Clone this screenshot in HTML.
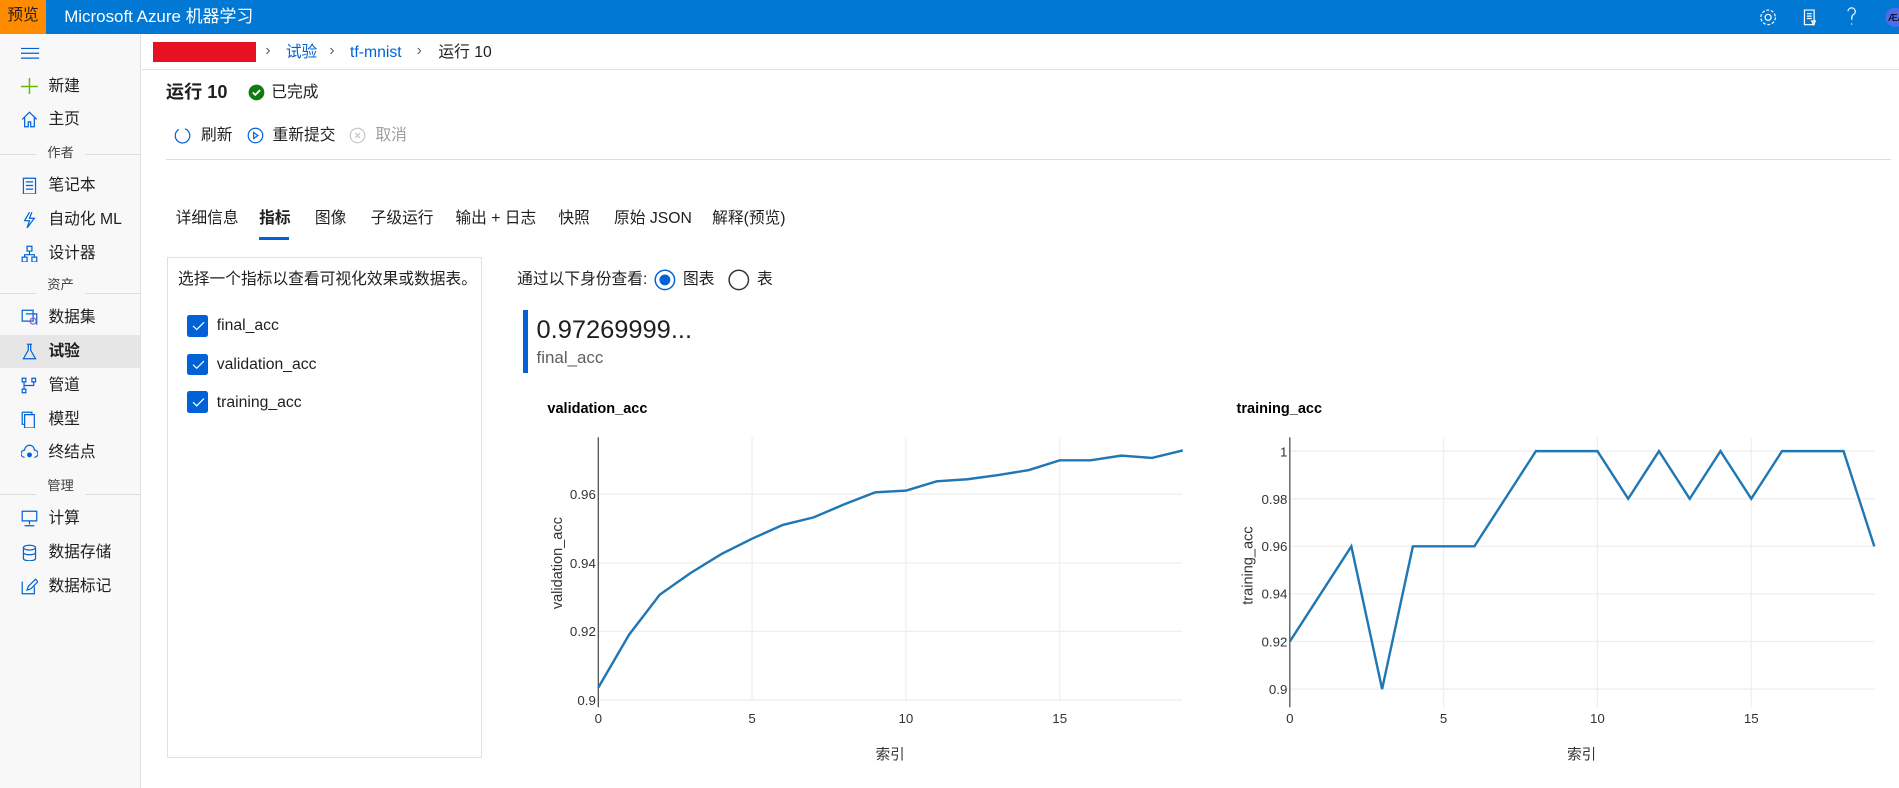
<!DOCTYPE html>
<html><head><meta charset="utf-8">
<style>
html,body{margin:0;padding:0;background:#fff;overflow:hidden}
body{width:1899px;height:788px}
#root{position:absolute;left:0;top:0;width:1568px;height:651px;zoom:1.2111;font-family:"Liberation Sans","Noto Sans CJK SC",sans-serif;color:#201f1e;font-size:13px;line-height:1.15}
.a{position:absolute;white-space:nowrap}
.top{left:0;top:0;width:1568px;height:28px;background:#0078d4}
.side{left:0;top:28px;width:116px;height:623px;background:#f8f8f8;border-right:1px solid #e1e1e1}
.nav{left:40px;font-size:13px}
.ic{left:17px;width:14px;height:14px}
.hd{font-size:11px;color:#444}
.sep{height:1px;background:#ddd}
.tab{top:173px;font-size:13px}
.cb{left:154px;width:18px;height:18px;background:#0062d6;border-radius:2px}
</style></head><body><div id="root">
<div class="a top"></div>
<div class="a" style="left:0;top:0;width:38px;height:28px;background:#ff8c00"></div>
<div class="a" style="left:6px;top:6px;font-size:13px;color:#201f1e">预览</div>
<div class="a" style="left:53px;top:6px;font-size:14px;color:#fff">Microsoft Azure 机器学习</div>
<svg class="a" style="left:1450px;top:3px" width="118" height="22" viewBox="0 0 118 22">
<g fill="none" stroke="#fff" stroke-width="1">
<circle cx="10" cy="11" r="2.5"/><circle cx="10" cy="11" r="6" stroke-dasharray="2.4 1.4"/>
<path d="M40 5h8v12h-8z M42 8h4 M42 10h4 M42 12h4 M46 14l3 0 -1.5 3z"/>
<path d="M76 6a3 3 0 1 1 4 3c-1 1-1 2-1 4 M79 16v1"/>
</g>
<circle cx="115" cy="11" r="8" fill="#4f6bed"/><text x="109" y="14" font-size="8" fill="#000" font-family="Liberation Sans">ÆA</text>
</svg>
<div class="a side"></div>
<svg class="a" style="left:17px;top:38px" width="16" height="12"><path d="M0 2h15M0 6h15M0 10h15" stroke="#0062d6" stroke-width="1"/></svg>
<svg class="a ic" style="top:64px"><path d="M7 0v14M0 7h14" stroke="#6bb700" stroke-width="1.2"/></svg>
<div class="a nav" style="top:64px">新建</div>
<svg class="a ic" style="top:92px"><path d="M1 7L7 1l6 6M3 5v8h3V9h2v4h3V5" fill="none" stroke="#0062d6"/></svg>
<div class="a nav" style="top:92px">主页</div>
<div class="a sep" style="left:0;top:127px;width:30px"></div><div class="a sep" style="left:70px;top:127px;width:46px"></div>
<div class="a hd" style="left:39px;top:120px">作者</div>
<svg class="a ic" style="top:146px"><path d="M2 1h10v13H2z M4 4h6M4 7h6M4 10h6" fill="none" stroke="#0062d6"/></svg>
<div class="a nav" style="top:146px">笔记本</div>
<svg class="a ic" style="top:174px"><path d="M7 1L3 8h4l-2 6 6-8H7l2-5" fill="none" stroke="#0062d6"/></svg>
<div class="a nav" style="top:174px">自动化 ML</div>
<svg class="a ic" style="top:202px"><path d="M5 1h4v4H5z M1 10h4v4H1z M9 10h4v4H9z M7 5v3M3 10V8h8v2" fill="none" stroke="#0062d6"/></svg>
<div class="a nav" style="top:202px">设计器</div>
<div class="a sep" style="left:0;top:242px;width:30px"></div><div class="a sep" style="left:70px;top:242px;width:46px"></div>
<div class="a hd" style="left:39px;top:229px">资产</div>
<svg class="a ic" style="top:255px"><path d="M1 1h9v9H1z M4 4h9v9" fill="none" stroke="#0062d6"/><circle cx="10" cy="10" r="2.5" fill="none" stroke="#8661c5"/></svg>
<div class="a nav" style="top:255px">数据集</div>
<div class="a" style="left:0;top:277px;width:116px;height:27px;background:#e6e6e6"></div>
<svg class="a ic" style="top:283px"><path d="M5 1h4M6 1v5L2 13h10L8 6V1" fill="none" stroke="#0062d6"/></svg>
<div class="a nav" style="top:283px;font-weight:bold">试验</div>
<svg class="a ic" style="top:311px"><path d="M1 1h3v3H1z M9 1h3v3H9z M1 10h3v3H1z M2.5 4v6M10.5 4v3H2.5" fill="none" stroke="#0062d6"/></svg>
<div class="a nav" style="top:311px">管道</div>
<svg class="a ic" style="top:339px"><path d="M1 1h8v2 M3 3h8v11H3z M1 1v10h2" fill="none" stroke="#0062d6"/></svg>
<div class="a nav" style="top:339px">模型</div>
<svg class="a ic" style="top:367px"><path d="M3 11a3 3 0 0 1 0-6 4 4 0 0 1 8 0 3 3 0 0 1 0 6" fill="none" stroke="#0062d6"/><circle cx="7" cy="9" r="2" fill="#0062d6"/></svg>
<div class="a nav" style="top:367px">终结点</div>
<div class="a sep" style="left:0;top:408px;width:30px"></div><div class="a sep" style="left:70px;top:408px;width:46px"></div>
<div class="a hd" style="left:39px;top:395px">管理</div>
<svg class="a ic" style="top:421px"><path d="M1 1h12v8H1z M7 9v3M3 13h8" fill="none" stroke="#0062d6"/></svg>
<div class="a nav" style="top:421px">计算</div>
<svg class="a ic" style="top:449px"><ellipse cx="7" cy="3" rx="5" ry="2" fill="none" stroke="#0062d6"/><path d="M2 3v9c0 2.5 10 2.5 10 0V3M2 7c0 2.5 10 2.5 10 0" fill="none" stroke="#0062d6"/></svg>
<div class="a nav" style="top:449px">数据存储</div>
<svg class="a ic" style="top:477px"><path d="M1 3v10h10V7 M5 10l1-3 6-6 2 2-6 6z" fill="none" stroke="#0062d6"/></svg>
<div class="a nav" style="top:477px">数据标记</div>

<div class="a" style="left:126px;top:35px;width:85px;height:16px;background:#e81123"></div>
<div class="a" style="left:219px;top:35px;color:#666">›</div>
<div class="a" style="left:236px;top:36px;color:#0062d6">试验</div>
<div class="a" style="left:272px;top:35px;color:#666">›</div>
<div class="a" style="left:289px;top:36px;color:#0062d6">tf-mnist</div>
<div class="a" style="left:344px;top:35px;color:#666">›</div>
<div class="a" style="left:362px;top:36px">运行 10</div>
<div class="a sep" style="left:117px;top:57px;width:1451px;background:#e1e1e1"></div>
<div class="a" style="left:137px;top:68px;font-size:15px;font-weight:bold">运行 10</div>
<svg class="a" style="left:205px;top:69px" width="14" height="14"><circle cx="7" cy="7" r="6.5" fill="#107c10"/><path d="M4 7l2 2 4-4" stroke="#fff" stroke-width="1.5" fill="none"/></svg>
<div class="a" style="left:224px;top:69px">已完成</div>
<svg class="a" style="left:144px;top:105px" width="14" height="14"><path d="M4 2A6 6 0 1 0 9 1.5" fill="none" stroke="#0062d6"/></svg>
<div class="a" style="left:166px;top:105px">刷新</div>
<svg class="a" style="left:204px;top:105px" width="14" height="14"><circle cx="7" cy="7" r="6" fill="none" stroke="#0062d6"/><path d="M5.5 4.5v5l3.5-2.5z" fill="none" stroke="#0062d6"/></svg>
<div class="a" style="left:225px;top:105px">重新提交</div>
<svg class="a" style="left:288px;top:105px" width="14" height="14"><circle cx="7" cy="7" r="6" fill="none" stroke="#c8c6c4"/><path d="M5 5l4 4M9 5l-4 4" stroke="#c8c6c4"/></svg>
<div class="a" style="left:310px;top:105px;color:#a19f9d">取消</div>
<div class="a sep" style="left:137px;top:131px;width:1424px;background:#ddd"></div>

<div class="a tab" style="left:145px">详细信息</div>
<div class="a tab" style="left:214px;font-weight:bold">指标</div>
<div class="a" style="left:214px;top:196px;width:25px;height:2px;background:#0062d6"></div>
<div class="a tab" style="left:260px">图像</div>
<div class="a tab" style="left:306px">子级运行</div>
<div class="a tab" style="left:376px">输出 + 日志</div>
<div class="a tab" style="left:461px">快照</div>
<div class="a tab" style="left:507px">原始 JSON</div>
<div class="a tab" style="left:588px">解释(预览)</div>

<div class="a" style="left:138px;top:212px;width:258px;height:412px;border:1px solid #e1e1e1"></div>
<div class="a" style="left:147px;top:224px">选择一个指标以查看可视化效果或数据表。</div>
<div class="a cb" style="top:260px"></div><div class="a cb" style="top:292px"></div><div class="a cb" style="top:323px"></div>
<svg class="a" style="left:154px;top:260px" width="18" height="82"><g stroke="#fff" fill="none" stroke-width="1"><path d="M5 9l3 3 6-6"/><path d="M5 41l3 3 6-6"/><path d="M5 72l3 3 6-6"/></g></svg>
<div class="a" style="left:179px;top:262px">final_acc</div>
<div class="a" style="left:179px;top:294px">validation_acc</div>
<div class="a" style="left:179px;top:325px">training_acc</div>

<div class="a" style="left:427px;top:224px">通过以下身份查看:</div>
<svg class="a" style="left:540px;top:222px" width="100" height="20"><circle cx="9" cy="9" r="8" fill="none" stroke="#0062d6" stroke-width="1.2"/><circle cx="9" cy="9" r="4.5" fill="#0062d6"/><circle cx="70" cy="9" r="8" fill="none" stroke="#333" stroke-width="1.2"/></svg>
<div class="a" style="left:564px;top:224px">图表</div>
<div class="a" style="left:625px;top:224px">表</div>
<div class="a" style="left:432px;top:256px;width:4px;height:52px;background:#0062d6"></div>
<div class="a" style="left:443px;top:261px;font-size:21px">0.97269999...</div>
<div class="a" style="left:443px;top:287px;font-size:14px;color:#605e5c">final_acc</div>

<svg class="a" style="left:0;top:0" width="1568" height="651" font-family="Liberation Sans,Noto Sans CJK SC,sans-serif">
<text x="452" y="341" font-size="12" font-weight="bold" fill="#000">validation_acc</text>
<text x="1021" y="341" font-size="12" font-weight="bold" fill="#000">training_acc</text>
<g stroke="#eee" stroke-width="1">
<path d="M621 361V578M748 361V578M875 361V578M494 521.3H976M494 464.7H976M494 408H976M494 578H976"/>
<path d="M1192 361V584M1319 361V584M1446 361V584M1065 372.5H1548M1065 411.8H1548M1065 451.1H1548M1065 490.4H1548M1065 529.7H1548M1065 569H1548"/>
</g>
<path d="M494 361V584M1065 361V584" stroke="#444" stroke-width="1"/>
<polyline fill="none" stroke="#1f77b4" stroke-width="2" points="494,567.8 519.4,524.1 544.8,491 570.2,473.1 595.6,457.5 621,444.8 646.4,433.4 671.8,427.2 697.2,416.4 722.6,406.5 748,405.1 773.4,397.4 798.8,395.7 824.2,392.3 849.6,388.1 875,380.1 900.4,380.1 925.8,376.2 951.2,378.1 976.6,371.9"/>
<polyline fill="none" stroke="#1f77b4" stroke-width="2" points="1065,529.7 1090.4,490.4 1115.8,451.1 1141.2,569 1166.6,451.1 1192,451.1 1217.4,451.1 1242.8,411.8 1268.2,372.5 1293.6,372.5 1319,372.5 1344.4,411.8 1369.8,372.5 1395.2,411.8 1420.6,372.5 1446,411.8 1471.4,372.5 1496.8,372.5 1522.2,372.5 1547.6,451.1"/>
<g font-size="11" fill="#333" text-anchor="end">
<text x="492" y="582">0.9</text><text x="492" y="525">0.92</text><text x="492" y="469">0.94</text><text x="492" y="412">0.96</text>
<text x="1063" y="573">0.9</text><text x="1063" y="534">0.92</text><text x="1063" y="494">0.94</text><text x="1063" y="455">0.96</text><text x="1063" y="416">0.98</text><text x="1063" y="377">1</text>
</g>
<g font-size="11" fill="#333" text-anchor="middle">
<text x="494" y="597">0</text><text x="621" y="597">5</text><text x="748" y="597">10</text><text x="875" y="597">15</text>
<text x="1065" y="597">0</text><text x="1192" y="597">5</text><text x="1319" y="597">10</text><text x="1446" y="597">15</text>
<text x="735" y="627" font-size="12">索引</text><text x="1306" y="627" font-size="12">索引</text>
<text transform="translate(464,465) rotate(-90)" font-size="12">validation_acc</text>
<text transform="translate(1034,467) rotate(-90)" font-size="12">training_acc</text>
</g>
</svg>
</div></body></html>
